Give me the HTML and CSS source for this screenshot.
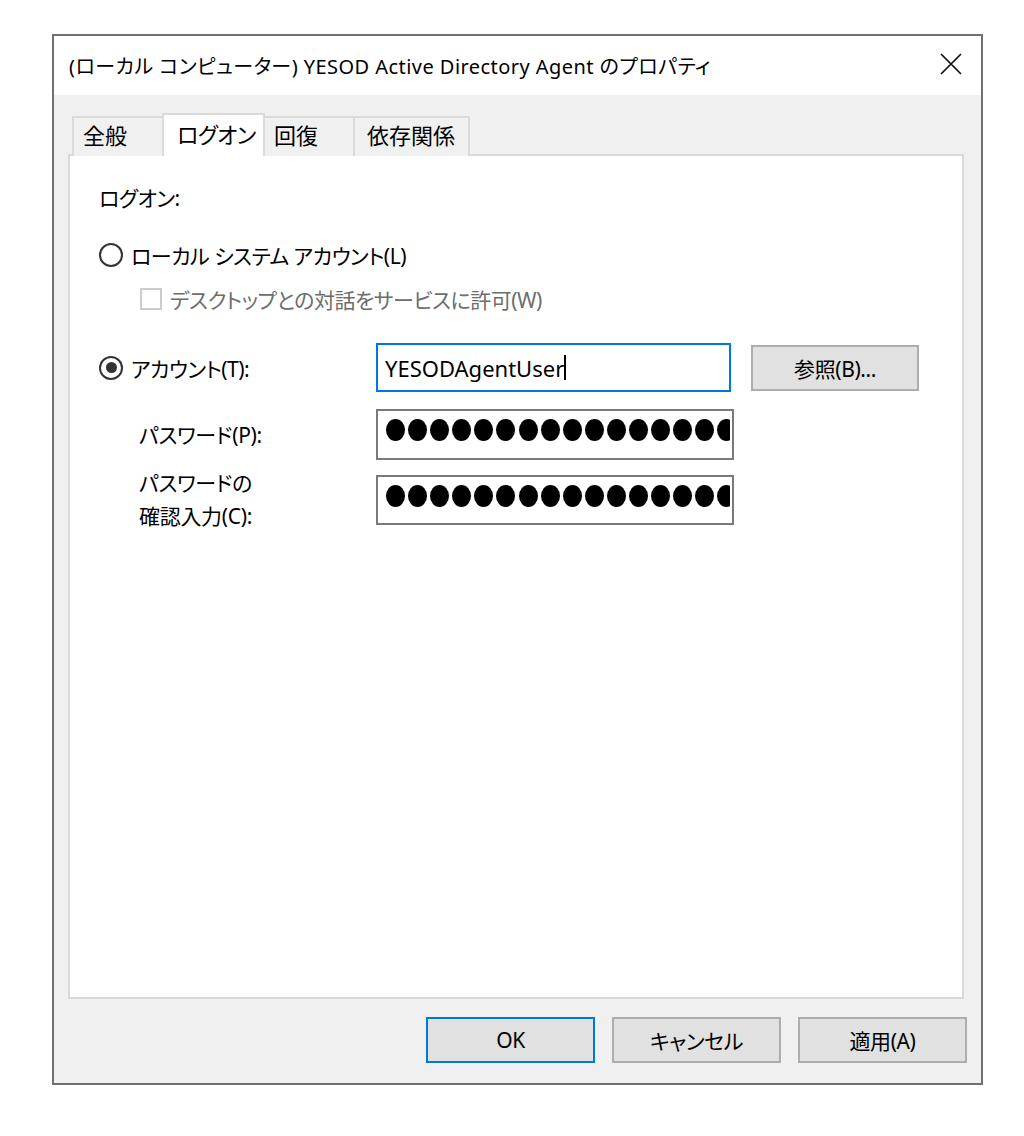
FILE: index.html
```html
<!DOCTYPE html>
<html lang="ja">
<head>
<meta charset="utf-8">
<title>YESOD Active Directory Agent のプロパティ</title>
<link rel="stylesheet" href="styles.css">
</head>
<body>
<div class="window">
  <div class="titlebar">
    <span class="title">(ローカル コンピューター) YESOD Active Directory Agent のプロパティ</span>
    <svg class="close" width="22" height="22" viewBox="0 0 22 22" aria-label="閉じる"><path d="M1 1L21 21M21 1L1 21" stroke="#111" stroke-width="1.7" fill="none"/></svg>
  </div>
  <div class="client">
    <div class="tabs">
      <div class="tab">全般</div>
      <div class="tab active">ログオン</div>
      <div class="tab">回復</div>
      <div class="tab">依存関係</div>
    </div>
    <div class="panel">
      <div class="heading">ログオン:</div>
      <div class="option first">
        <span class="radio"></span><span class="label">ローカル システム アカウント(L)</span>
      </div>
      <div class="option sub disabled">
        <span class="checkbox"></span><span class="label">デスクトップとの対話をサービスに許可(W)</span>
      </div>
      <div class="form">
        <div class="row row-account">
          <div class="cell-label option">
            <span class="radio checked"></span><span class="label">アカウント(T):</span>
          </div>
          <div class="input focused"><span class="value">YESODAgentUser</span><span class="caret"></span></div>
          <div class="button browse">参照(B)...</div>
        </div>
        <div class="row row-pass">
          <div class="cell-label field-label">パスワード(P):</div>
          <div class="input wide"><div class="dots"><span></span><span></span><span></span><span></span><span></span><span></span><span></span><span></span><span></span><span></span><span></span><span></span><span></span><span></span><span></span><span></span><span></span></div></div>
        </div>
        <div class="row row-confirm">
          <div class="cell-label field-label two">パスワードの<br>確認入力(C):</div>
          <div class="input wide"><div class="dots"><span></span><span></span><span></span><span></span><span></span><span></span><span></span><span></span><span></span><span></span><span></span><span></span><span></span><span></span><span></span><span></span><span></span></div></div>
        </div>
      </div>
    </div>
    <div class="buttons">
      <div class="button default">OK</div>
      <div class="button">キャンセル</div>
      <div class="button">適用(A)</div>
    </div>
  </div>
</div>
</body>
</html>
```

FILE: styles.css
```css
* { box-sizing: border-box; }
html, body { margin: 0; padding: 0; background: #ffffff; }
body {
  font-family: "Noto Sans", "Noto Sans CJK JP", sans-serif;
  font-feature-settings: "palt";
  color: #000;
  padding: 34px 0 0 52px;
}
.window {
  width: 931px;
  height: 1051px;
  border: 2px solid #707070;
  display: flex;
  flex-direction: column;
  background: #f0f0f0;
}
.titlebar {
  height: 59px;
  background: #ffffff;
  display: flex;
  align-items: center;
  justify-content: space-between;
  padding: 0 19px 0 15px;
  flex: none;
}
.title {
  font-size: 20px;
  letter-spacing: 0.45px;
  line-height: 1;
  padding-top: 3px;
  white-space: nowrap;
}
.close { display: block; margin-top: -4px; }
.client {
  flex: 1;
  display: flex;
  flex-direction: column;
  padding: 18px 14px 18px 14px;
}
.tabs {
  display: flex;
  align-items: flex-end;
  padding-left: 4px;
  height: 43px;
  flex: none;
  position: relative;
  z-index: 1;
  margin-bottom: -2px;
}
.tab {
  height: 40px;
  border: 2px solid #dadada;
  border-bottom: none;
  margin-left: -2px;
  background: #f0f0f0;
  font-size: 22px;
  line-height: 34px;
  padding: 0 0 0 9px;
  white-space: nowrap;
}
.tab:first-child { margin-left: 0; width: 92px; }
.tab:nth-child(2) { width: 103px; }
.tab:nth-child(3) { width: 92px; }
.tab:nth-child(4) { width: 117px; padding-left: 12px; }
.tab.active {
  height: 43px;
  background: #ffffff;
  position: relative;
  z-index: 2;
  padding-left: 13px;
  line-height: 38px;
  letter-spacing: -0.6px;
}
.panel {
  width: 896px;
  height: 845px;
  background: #ffffff;
  border: 2px solid #dadada;
  padding: 27px 0 0 29px;
  flex: none;
}
.heading {
  font-size: 21px;
  letter-spacing: -0.5px;
  height: 30px;
  line-height: 30px;
}
.option {
  display: flex;
  align-items: center;
  font-size: 21px;
  letter-spacing: -0.5px;
  height: 30px;
  white-space: nowrap;
}
.option.first { margin-top: 27px; }
.option.sub { margin-top: 14px; padding-left: 41px; }
.disabled { color: #6d6d6d; }
.radio {
  width: 24px;
  height: 24px;
  border: 2px solid #333;
  border-radius: 50%;
  margin-right: 8px;
  flex: none;
  display: flex;
  align-items: center;
  justify-content: center;
}
.radio.checked::after {
  content: "";
  width: 11px;
  height: 11px;
  border-radius: 50%;
  background: #333;
}
.checkbox {
  width: 22px;
  height: 22px;
  border: 2px solid #cccccc;
  margin-right: 8px;
  flex: none;
}
.form {
  margin-top: 29px;
  display: flex;
  flex-direction: column;
}
.row {
  display: flex;
  align-items: center;
}
.row-account { height: 49px; }
.row-pass { height: 51px; margin-top: 17px; }
.row-confirm { height: 50px; margin-top: 15px; }
.cell-label {
  width: 277px;
  flex: none;
}
.field-label {
  font-size: 21px;
  letter-spacing: -0.3px;
  padding-left: 40px;
  line-height: 30px;
}
.field-label.two { line-height: 33px; }
.input {
  height: 100%;
  width: 355px;
  border: 2px solid #7a7a7a;
  background: #fff;
  display: flex;
  align-items: center;
  padding-left: 7px;
  overflow: hidden;
}
.input.wide {
  width: 358px;
  padding: 8px 2px 0 8px;
  align-items: flex-start;
}
.input.focused { border-color: #0078d7; }
.value { font-size: 22px; }
.caret {
  width: 2px;
  height: 25px;
  background: #000;
}
.dots {
  display: flex;
  gap: 3.1px;
  overflow: hidden;
  width: 100%;
  height: 22px;
}
.dots span {
  flex: none;
  width: 19px;
  height: 22px;
  border-radius: 50%;
  background: #000;
}
.button {
  background: #e1e1e1;
  border: 2px solid #adadad;
  display: flex;
  align-items: center;
  justify-content: center;
  font-size: 21px;
  letter-spacing: -0.4px;
  width: 169px;
  height: 46px;
  white-space: nowrap;
}
.browse { margin-left: 20px; width: 168px; }
.buttons {
  display: flex;
  justify-content: flex-end;
  gap: 17px;
  margin-top: 18px;
}
.button.default { border-color: #0078d7; }
```
